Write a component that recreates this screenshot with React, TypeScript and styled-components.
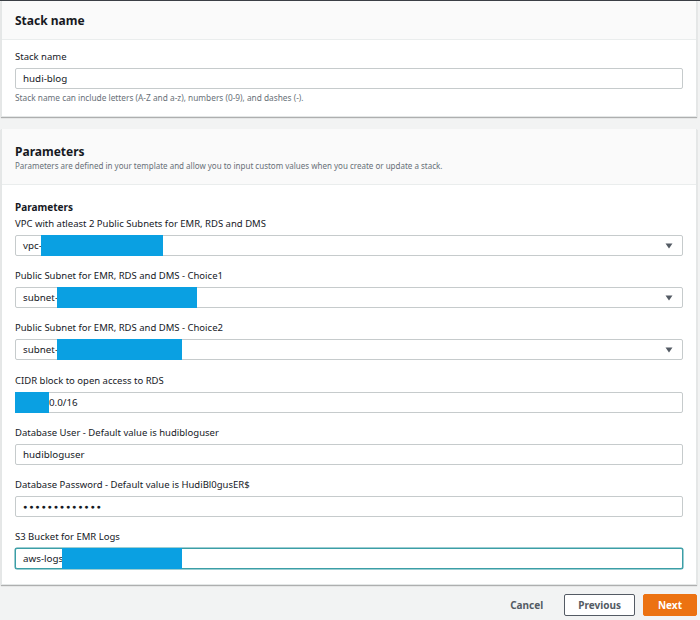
import React from "react";
import styled, { createGlobalStyle } from "styled-components";

const Global = createGlobalStyle`
  html, body { margin: 0; padding: 0; }
  body {
    background: #f2f3f3;
    font-family: "Noto Sans", "Open Sans", Arial, sans-serif;
    color: #16191f;
    width: 700px;
  }
`;

const Page = styled.div`
  width: 700px;
  height: 620px;
  overflow: hidden;
  border-top: 1px solid #3b3f45;
  box-sizing: border-box;
`;

const Card = styled.section<{ $mt?: number }>`
  margin: ${(p) => p.$mt ?? 0}px 3px 0 1px;
  background: #ffffff;
  border: 1px solid #e4e7e7;
  border-top: none;
  box-shadow: 0 1px 1px rgba(0, 0, 0, 0.28);
`;

const CardHeader = styled.header<{ $h: number; $pt?: number }>`
  height: ${(p) => p.$h}px;
  box-sizing: border-box;
  background: #fafafa;
  border-bottom: 1px solid #eaeded;
  padding: ${(p) => p.$pt ?? 0}px 13px 0 13px;
  display: flex;
  flex-direction: column;
  justify-content: ${(p) => (p.$pt ? "flex-start" : "center")};
`;

const CardTitle = styled.h2`
  margin: 0;
  font-size: 12px;
  line-height: 17px;
  font-weight: 700;
  color: #16191f;
`;

const CardDesc = styled.p`
  margin: 0;
  font-size: 8px;
  line-height: 12px;
  color: #687078;
`;

const CardBody = styled.div<{ $pt: number; $pb: number }>`
  padding: ${(p) => p.$pt}px 13px ${(p) => p.$pb}px 13px;
`;

const GroupTitle = styled.h3`
  margin: 0;
  font-size: 10px;
  line-height: 14px;
  font-weight: 700;
  color: #16191f;
  margin-bottom: 3px;
`;

const Field = styled.div<{ $mb?: number }>`
  margin-bottom: ${(p) => p.$mb ?? 13}px;
`;

const Label = styled.div`
  font-size: 9.5px;
  line-height: 14px;
  color: #16191f;
  margin-bottom: 4px;
`;

const Help = styled.div`
  font-size: 8.3px;
  line-height: 12px;
  color: #687078;
  margin-top: 3px;
`;

const Box = styled.div<{ $focus?: boolean }>`
  height: 21px;
  box-sizing: border-box;
  border: 1px solid ${(p) => (p.$focus ? "#3b9ea6" : "#c6cbcc")};
  box-shadow: ${(p) => (p.$focus ? "0 0 0 0.5px #3b9ea6" : "none")};
  border-radius: 2px;
  background: #fff;
  display: flex;
  align-items: center;
  padding-left: 7px;
  font-size: 9.8px;
  color: #16191f;
  position: relative;
`;

const Redact = styled.span<{ $w: number; $left?: boolean }>`
  align-self: stretch;
  width: ${(p) => p.$w}px;
  background: #0aa0e2;
  margin: -1px 0;
  margin-left: ${(p) => (p.$left ? "-8px" : "-1px")};
`;

const Dots = styled.span`
  font-size: 7px;
  letter-spacing: 1.9px;
  color: #16191f;
`;

const Caret = styled.svg`
  position: absolute;
  right: 9px;
  top: 7px;
`;

const Footer = styled.div`
  display: flex;
  justify-content: flex-end;
  align-items: center;
  gap: 8px;
  margin: 9px 3px 0 0;
`;

const LinkButton = styled.button`
  background: none;
  border: none;
  font-family: inherit;
  font-size: 10px;
  font-weight: 700;
  color: #545b64;
  padding: 0 13px 0 0;
  height: 22px;
`;

const Button = styled.button<{ $primary?: boolean }>`
  height: 22px;
  box-sizing: border-box;
  font-family: inherit;
  font-size: 10px;
  font-weight: 700;
  border-radius: 2px;
  padding: 0 ${(p) => (p.$primary ? 14 : 13)}px;
  border: 1px solid ${(p) => (p.$primary ? "#ec7211" : "#545b64")};
  background: ${(p) => (p.$primary ? "#ec7211" : "#ffffff")};
  color: ${(p) => (p.$primary ? "#ffffff" : "#545b64")};
`;

const SelectCaret = () => (
  <Caret width="8" height="6" viewBox="0 0 8 6">
    <path d="M0.5 0.5 L7.5 0.5 L4 5.5 Z" fill="#545b64" />
  </Caret>
);

type Param = {
  label: string;
  prefix?: string;
  redact?: number;
  redactLeft?: boolean;
  suffix?: string;
  select?: boolean;
  password?: boolean;
  focus?: boolean;
};

const params: Param[] = [
  { label: "VPC with atleast 2 Public Subnets for EMR, RDS and DMS", prefix: "vpc-", redact: 122, select: true },
  { label: "Public Subnet for EMR, RDS and DMS - Choice1", prefix: "subnet-", redact: 140, select: true },
  { label: "Public Subnet for EMR, RDS and DMS - Choice2", prefix: "subnet-", redact: 125, select: true },
  { label: "CIDR block to open access to RDS", redact: 34, redactLeft: true, suffix: "0.0/16" },
  { label: "Database User - Default value is hudibloguser", prefix: "hudibloguser" },
  { label: "Database Password - Default value is HudiBl0gusER$", password: true },
  { label: "S3 Bucket for EMR Logs", prefix: "aws-logs", redact: 120, focus: true },
];

export default function App() {
  return (
    <Page>
      <Global />
      <Card>
        <CardHeader $h={39}>
          <CardTitle>Stack name</CardTitle>
        </CardHeader>
        <CardBody $pt={10} $pb={12}>
          <Label>Stack name</Label>
          <Box>hudi-blog</Box>
          <Help>Stack name can include letters (A-Z and a-z), numbers (0-9), and dashes (-).</Help>
        </CardBody>
      </Card>
      <Card $mt={12}>
        <CardHeader $h={56} $pt={14}>
          <CardTitle>Parameters</CardTitle>
          <CardDesc>
            Parameters are defined in your template and allow you to input custom values when you create or update a stack.
          </CardDesc>
        </CardHeader>
        <CardBody $pt={15} $pb={15}>
          <GroupTitle>Parameters</GroupTitle>
          {params.map((p, i) => (
            <Field key={p.label} $mb={i === params.length - 1 ? 0 : 13.2}>
              <Label>{p.label}</Label>
              <Box $focus={p.focus}>
                {p.prefix && <span>{p.prefix}</span>}
                {p.redact && <Redact $w={p.redact} $left={p.redactLeft} />}
                {p.suffix && <span>{p.suffix}</span>}
                {p.password && <Dots>●●●●●●●●●●●●●</Dots>}
                {p.select && <SelectCaret />}
              </Box>
            </Field>
          ))}
        </CardBody>
      </Card>
      <Footer>
        <LinkButton>Cancel</LinkButton>
        <Button>Previous</Button>
        <Button $primary>Next</Button>
      </Footer>
    </Page>
  );
}
